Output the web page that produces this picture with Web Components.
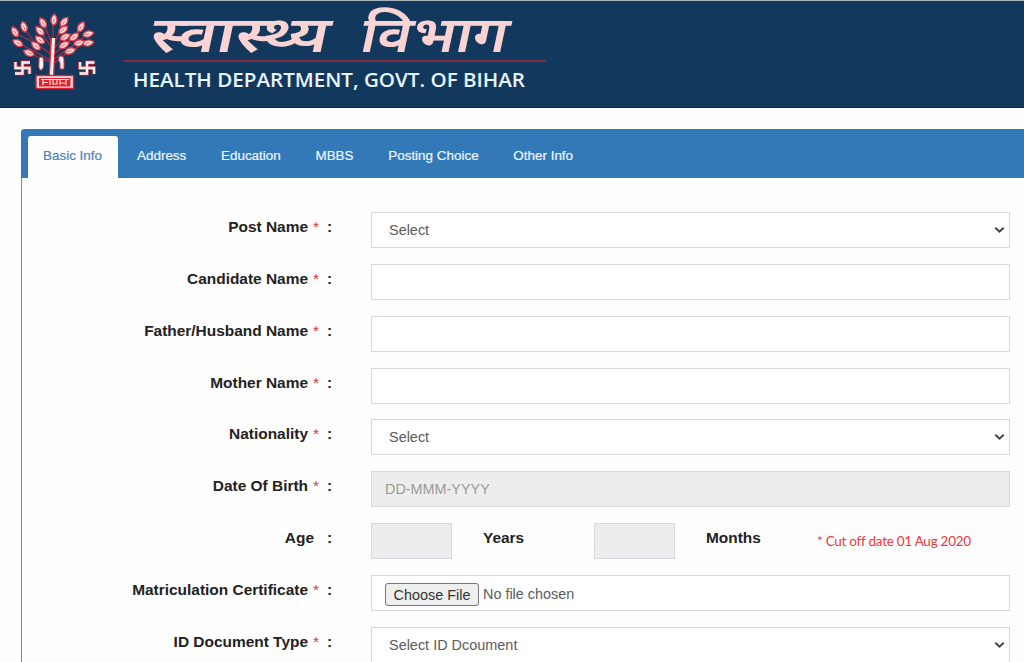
<!DOCTYPE html>
<html lang="en">
<head>
<meta charset="utf-8">
<title>Health Department, Govt. of Bihar</title>
<style>
    body {
        margin: 0;
        overflow: hidden;
        background: #fefefe;
        font-family: "Liberation Sans", Arial, sans-serif;
    }
</style>
</head>
<body>
<dept-header></dept-header>
<tab-panel>
    <tab-item slot="tabs" style="width:90px" active>Basic Info</tab-item>
    <tab-item slot="tabs" style="margin-left:19px">Address</tab-item>
    <tab-item slot="tabs">Education</tab-item>
    <tab-item slot="tabs">MBBS</tab-item>
    <tab-item slot="tabs">Posting Choice</tab-item>
    <tab-item slot="tabs">Other Info</tab-item>

    <form-row label="Post Name" required><select-box>Select</select-box></form-row>
    <form-row label="Candidate Name" required><text-box></text-box></form-row>
    <form-row label="Father/Husband Name" required><text-box></text-box></form-row>
    <form-row label="Mother Name" required><text-box></text-box></form-row>
    <form-row label="Nationality" required><select-box>Select</select-box></form-row>
    <form-row label="Date Of Birth" required><text-box disabled>DD-MMM-YYYY</text-box></form-row>
    <form-row label="Age"><age-fields></age-fields></form-row>
    <form-row label="Matriculation Certificate" required><file-box></file-box></form-row>
    <form-row label="ID Document Type" required><select-box>Select ID Dcoument</select-box></form-row>
</tab-panel>

<script>
class StateEmblem extends HTMLElement {

    constructor() {
        super();
        this.shadowDOM = this.attachShadow({mode: "open"});
    }

    connectedCallback() {
        // x, y, rotation of every leaf on the tree
        const leaves = [
            [15, 32, -28], [24, 27, -18], [18, 43, -62], [29, 53, -68],
            [36, 46, -48], [40, 40, -50], [40, 31, -45], [43, 23, -28],
            [54, 20, 5], [64, 22, 40], [63, 30, 52], [65, 37, 62],
            [64, 45, 62], [70, 51, 72], [74, 37, 50], [79, 43, 76],
            [81, 27, 28], [88, 34, 75], [88, 43, 82]
        ];
        const leaf = ([x, y, r]) => `
            <g transform="translate(${x} ${y}) rotate(${r}) scale(1.08)">
                <path d="M0-5.500C4-2 3.500 3 0 5C-3.500 3-4-2 0-5.500Z" fill="#ffe1e1" stroke="#e03a48" stroke-width="1.200"/>
                <path d="M0-1.500V3" stroke="#e65a66" stroke-width=".8"/>
            </g>`;
        const swastika = "M-7-6V0H7V6M7.500-5.500H0V5.500H-7.500";

        this.shadowDOM.innerHTML = `
        <style>
        :host {
            display: block;
            width: 110px;
            height: 106px;
        }

        svg {
            display: block;
        }
        </style>

        <svg width="110" height="106" viewBox="0 1 110 106" fill="none">
            <g stroke="#b82a42" stroke-width="1.200">
                <path d="M50 60L34 51L18 43M49 62L29 53M51 54L35 43L24 28M35 43L15 33M52 48L40 31M52 43L43 23M53 40V20M54 44L64 23M54 49L64 36M54 54L65 45L81 27M54 59L74 45L88 34M54 63L70 51L86 43"/>
            </g>
            <path d="M53 38L51.500 75" stroke="#e02d3b" stroke-width="5.400"/>
            <path d="M53.500 38L51.500 75" stroke="#fff0ee" stroke-width="3"/>
            ${leaves.map(leaf).join("")}
            <g fill="#fff3f1" stroke="#dc3040" stroke-width="1">
                <path d="M41 57C44 57 43 60 43.500 62C44 66 43 70 41 70C38 70 39 64 39 61C39 59 39 57 41 57Z"/>
                <path d="M61 56C64 56 64 59 64 62L64 69H60V63C58 60 58 56 61 56Z"/>
            </g>
            <g stroke="#d92d3d" stroke-width="3.800">
                <path transform="translate(22.500 68)" d="${swastika}"/>
                <path transform="translate(87 68)" d="${swastika}"/>
            </g>
            <g stroke="#fff2f0" stroke-width="2.300">
                <path transform="translate(22.500 68)" d="${swastika}"/>
                <path transform="translate(87 68)" d="${swastika}"/>
            </g>
            <path d="M36 75.500H73.500V88.500H36Z" fill="#f9e2e2" stroke="#d9202e" stroke-width="1.400"/>
            <path d="M39 78H70.500V86.500H39Z" fill="#e0202c"/>
            <path d="M41 79.500H69M43 80V85M43 82.500H48M50 80V85M53 80V84H57V80M60 80V85M60 83H65M66 80V85" stroke="#ffe3e0" stroke-width="1.200"/>
        </svg>`;
    }
}
customElements.define("state-emblem", StateEmblem);

class DeptHeader extends HTMLElement {

    constructor() {
        super();
        this.shadowDOM = this.attachShadow({mode: "open"});
        this.shadowDOM.innerHTML = `
        <style>
        :host {
            display: flex;
            box-sizing: border-box;
            height: 108px;
            border-top: 1px solid #a9b4bd;
            border-bottom: 1px solid #0d2947;
            background: #12395d;
        }

        .title {
            display: block;
        }
        </style>

        <state-emblem></state-emblem>
        <svg class="title" width="450" height="106" viewBox="110 1 450 106">
            <g font-family="'Noto Sans Devanagari', 'Noto Sans', sans-serif" font-weight="600" font-size="50" fill="#fbd3d2" transform="translate(0 52) skewX(-12)">
                <text x="148" y="0" textLength="178" lengthAdjust="spacingAndGlyphs">स्वास्थ्य</text>
                <text x="358" y="0" textLength="147" lengthAdjust="spacingAndGlyphs">विभाग</text>
            </g>
            <path d="M124 60.800H546" stroke="#893046" stroke-width="1.800"/>
            <text x="133" y="86.500" font-family="'Open Sans', sans-serif" font-weight="600" font-size="19.500" fill="#e9f5fc" textLength="392" lengthAdjust="spacingAndGlyphs">HEALTH DEPARTMENT, GOVT. OF BIHAR</text>
        </svg>`;
    }
}
customElements.define("dept-header", DeptHeader);

class TabPanel extends HTMLElement {

    constructor() {
        super();
        this.shadowDOM = this.attachShadow({mode: "open"});
        this.shadowDOM.innerHTML = `
        <style>
        :host {
            display: block;
            box-sizing: border-box;
            height: 533px;
            margin: 21px 0 0 21px;
            border-left: 1px solid #5c93c6;
            border-top-left-radius: 4px;
        }

        nav {
            display: flex;
            align-items: flex-end;
            box-sizing: border-box;
            height: 49px;
            margin-left: -1px;
            padding-left: 7px;
            border-top-left-radius: 4px;
            background: #3479b7;
        }

        .body {
            box-sizing: border-box;
            height: 484px;
            padding-top: 34px;
            overflow: hidden;
        }
        </style>

        <nav><slot name="tabs"></slot></nav>
        <div class="body"><slot></slot></div>`;
    }
}
customElements.define("tab-panel", TabPanel);

class TabItem extends HTMLElement {

    constructor() {
        super();
        this.shadowDOM = this.attachShadow({mode: "open"});
        this.shadowDOM.innerHTML = `
        <style>
        :host {
            display: block;
            box-sizing: border-box;
            height: 42px;
            margin-right: 34.7px;
            color: #eef6fd;
            font-size: 13.45px;
            line-height: 40px;
            white-space: nowrap;
            -webkit-text-stroke: .2px;
        }

        :host([active]) {
            margin-right: 0;
            padding-left: 15px;
            border-radius: 3px 3px 0 0;
            background: #fefefe;
            color: #4c82b6;
        }
        </style>

        <slot></slot>`;
    }
}
customElements.define("tab-item", TabItem);

class FormRow extends HTMLElement {

    constructor() {
        super();
        this.shadowDOM = this.attachShadow({mode: "open"});
    }

    connectedCallback() {
        const star = this.hasAttribute("required") ? "*" : "";

        this.shadowDOM.innerHTML = `
        <style>
        :host {
            display: grid;
            grid-template-columns: 310px 39px 639px;
            height: 51.85px;
        }

        .label {
            display: flex;
            justify-content: flex-end;
            height: 30px;
            color: #222;
            font-size: 15.45px;
            font-weight: bold;
            line-height: 30px;
            white-space: nowrap;
        }

        .star {
            width: 9px;
            margin-left: 5px;
            color: #f03030;
            font-weight: normal;
        }

        .star:empty {
            width: 3px;
        }

        .colon {
            width: 5px;
            margin-left: 5px;
        }
        </style>

        <div class="label">${this.getAttribute("label")}<span class="star">${star}</span><span class="colon">:</span></div>
        <span></span>
        <slot></slot>`;
    }
}
customElements.define("form-row", FormRow);

class TextBox extends HTMLElement {

    constructor() {
        super();
        this.shadowDOM = this.attachShadow({mode: "open"});
        this.shadowDOM.innerHTML = `
        <style>
        :host {
            display: block;
            box-sizing: border-box;
            height: 36px;
            padding-left: 13px;
            border: 1px solid #d5d8dc;
            background: #fff;
            color: #999;
            font-size: 14.4px;
            line-height: 34px;
        }

        :host([disabled]) {
            background: #ededed;
        }
        </style>

        <slot></slot>`;
    }
}
customElements.define("text-box", TextBox);

class SelectBox extends HTMLElement {

    constructor() {
        super();
        this.shadowDOM = this.attachShadow({mode: "open"});
        this.shadowDOM.innerHTML = `
        <style>
        :host {
            display: flex;
            align-items: center;
            justify-content: space-between;
            box-sizing: border-box;
            height: 36px;
            padding: 0 4px 0 17px;
            border: 1px solid #d5d8dc;
            background: #fff;
            color: #5b5b5b;
            font-size: 14.45px;
        }
        </style>

        <slot></slot>
        <svg width="11" height="8" viewBox="0 0 11 8" fill="none">
            <path d="M1.300 1.800L5.500 5.700L9.700 1.800" stroke="#444" stroke-width="2"/>
        </svg>`;
    }
}
customElements.define("select-box", SelectBox);

class FileBox extends HTMLElement {

    constructor() {
        super();
        this.shadowDOM = this.attachShadow({mode: "open"});
        this.shadowDOM.innerHTML = `
        <style>
        :host {
            display: flex;
            align-items: center;
            gap: 4px;
            box-sizing: border-box;
            height: 36px;
            padding: 3px 0 0 13px;
            border: 1px solid #d5d8dc;
            background: #fff;
            color: #5b5b5b;
            font-size: 14.4px;
        }

        .button {
            box-sizing: border-box;
            width: 94px;
            height: 23px;
            border: 1px solid #777;
            border-radius: 3px;
            background: #efefef;
            color: #333;
            line-height: 22px;
            text-align: center;
        }
        </style>

        <span class="button">Choose File</span>
        <span>No file chosen</span>`;
    }
}
customElements.define("file-box", FileBox);

class AgeFields extends HTMLElement {

    constructor() {
        super();
        this.shadowDOM = this.attachShadow({mode: "open"});
        this.shadowDOM.innerHTML = `
        <style>
        :host {
            display: grid;
            grid-template-columns: 81px 142px 81px 142px 1fr;
            height: 36px;
        }

        .unit {
            padding-left: 31px;
            color: #222;
            font-size: 15.45px;
            font-weight: bold;
            line-height: 30px;
        }

        .note {
            color: #e83a3a;
            font-family: Lato, sans-serif;
            font-size: 13.5px;
            letter-spacing: -.26px;
            line-height: 37px;
            white-space: nowrap;
        }
        </style>

        <text-box disabled></text-box>
        <span class="unit">Years</span>
        <text-box disabled></text-box>
        <span class="unit">Months</span>
        <span class="note">* Cut off date 01 Aug 2020</span>`;
    }
}
customElements.define("age-fields", AgeFields);
</script>
</body>
</html>
